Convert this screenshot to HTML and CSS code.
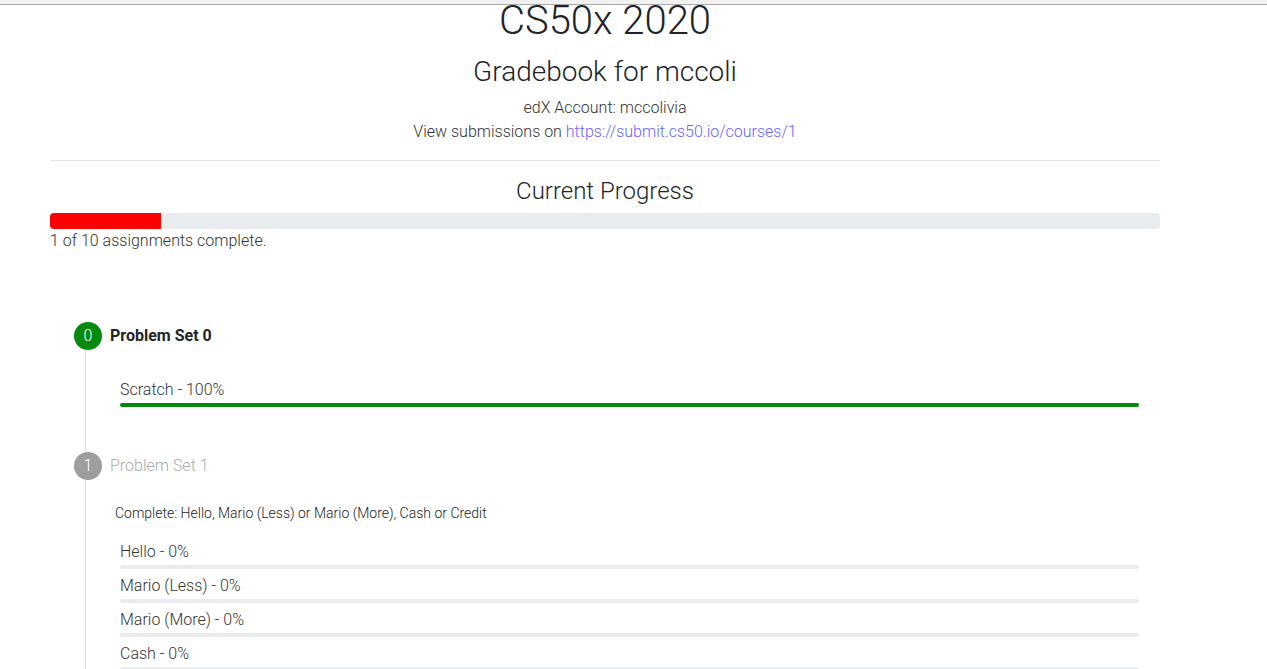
FILE: index.html
```html
<!DOCTYPE html>
<html lang="en">
<head>
<meta charset="utf-8">
<title>CS50x 2020 Gradebook</title>
<link rel="stylesheet" href="styles.css">
</head>
<body>
<div class="topbar"></div>
<main class="container">
  <header class="head">
    <h1 class="title">CS50x 2020</h1>
    <h3 class="subtitle">Gradebook for mccoli</h3>
    <p class="meta">edX Account: mccolivia</p>
    <p class="meta">View submissions on <a class="link" href="#">https://submit.cs50.io/courses/1</a></p>
  </header>
  <hr class="rule">
  <section class="overall">
    <h4 class="section-title">Current Progress</h4>
    <div class="progress"><div class="progress-fill" style="width:10%"></div></div>
    <p class="progress-text">1 of 10 assignments complete.</p>
  </section>
  <section class="timeline">
    <div class="step done">
      <div class="step-head">
        <span class="dot dot-green">0</span>
        <span class="step-title">Problem Set 0</span>
      </div>
      <div class="step-body body-first">
        <div class="item">
          <div class="item-label">Scratch - 100%</div>
          <div class="bar"><div class="bar-fill" style="width:100%"></div></div>
        </div>
      </div>
    </div>
    <div class="step pending">
      <div class="step-head">
        <span class="dot dot-gray">1</span>
        <span class="step-title">Problem Set 1</span>
      </div>
      <div class="step-body">
        <p class="note">Complete: Hello, Mario (Less) or Mario (More), Cash or Credit</p>
        <div class="item">
          <div class="item-label">Hello - 0%</div>
          <div class="bar"></div>
        </div>
        <div class="item">
          <div class="item-label">Mario (Less) - 0%</div>
          <div class="bar"></div>
        </div>
        <div class="item">
          <div class="item-label">Mario (More) - 0%</div>
          <div class="bar"></div>
        </div>
        <div class="item">
          <div class="item-label">Cash - 0%</div>
          <div class="bar"></div>
        </div>
      </div>
    </div>
  </section>
</main>
</body>
</html>
```
FILE: styles.css
```css
* { box-sizing: border-box; }
html, body { margin: 0; padding: 0; }
body {
  font-family: Roboto, "Liberation Sans", Arial, sans-serif;
  font-weight: 300;
  color: #333;
  background: #fff;
  font-size: 16px;
  line-height: 24px;
  height: 669px;
  overflow: hidden;
}
.topbar {
  height: 5px;
  background: #f1f1f1;
  border-bottom: 1px solid #a9a9a9;
}
.container {
  margin-left: 50px;
  width: 1110px;
}
.head { text-align: center; }
.title {
  margin: -1px 0 0;
  font-size: 40px;
  font-weight: 300;
  line-height: 34px;
  color: #212529;
}
.subtitle {
  margin: 17px 0 0;
  font-size: 28px;
  font-weight: 300;
  line-height: 33px;
  color: #212529;
}
.meta { margin: 8px 0 0; }
.meta + .meta { margin-top: 0; }
.link { color: #6c63ff; text-decoration: none; }
.rule {
  margin: 16px 0 0;
  border: 0;
  border-top: 1px solid #e4e4e4;
}
.section-title {
  margin: 16px 0 0;
  text-align: center;
  font-size: 24px;
  font-weight: 300;
  line-height: 29px;
  color: #212529;
}
.progress {
  margin-top: 7px;
  height: 16px;
  background: #e9ecef;
  border-radius: 4px;
  overflow: hidden;
  display: flex;
}
.progress-fill { background: #ff0000; height: 100%; }
.progress-text { margin: 0; }
.timeline {
  margin-top: 69px;
  padding-left: 24px;
}
.step-head {
  display: flex;
  align-items: center;
  height: 28px;
}
.dot {
  width: 28px;
  height: 28px;
  border-radius: 50%;
  display: flex;
  align-items: center;
  justify-content: center;
  color: #fff;
  font-size: 16px;
  flex-shrink: 0;
}
.dot-green { background: #058a0e; }
.dot-gray { background: #9e9e9e; }
.step-title { margin-left: 8px; }
.done .step-title { font-weight: 700; color: #212529; }
.pending .step-title { font-weight: 300; color: #aaa; }
.step-body {
  margin-left: 11px;
  border-left: 1px solid #dedede;
  padding-left: 34px;
  padding-right: 21px;
}
.body-first { padding-top: 28px; padding-bottom: 40px; }
.pending .step-body { padding-top: 23px; padding-left: 0; }
.pending .item { margin-left: 34px; }
.note {
  margin: 0 0 16px 29px;
  font-size: 14px;
  line-height: 21px;
  font-weight: 300;
  color: #212529;
}
.item { margin-bottom: 5px; }
.item-label { height: 24px; margin-bottom: 1px; }
.bar {
  height: 4px;
  background: #e9ecef;
  border-radius: 2px;
  overflow: hidden;
}
.bar-fill { height: 100%; background: #058a0e; }
```
